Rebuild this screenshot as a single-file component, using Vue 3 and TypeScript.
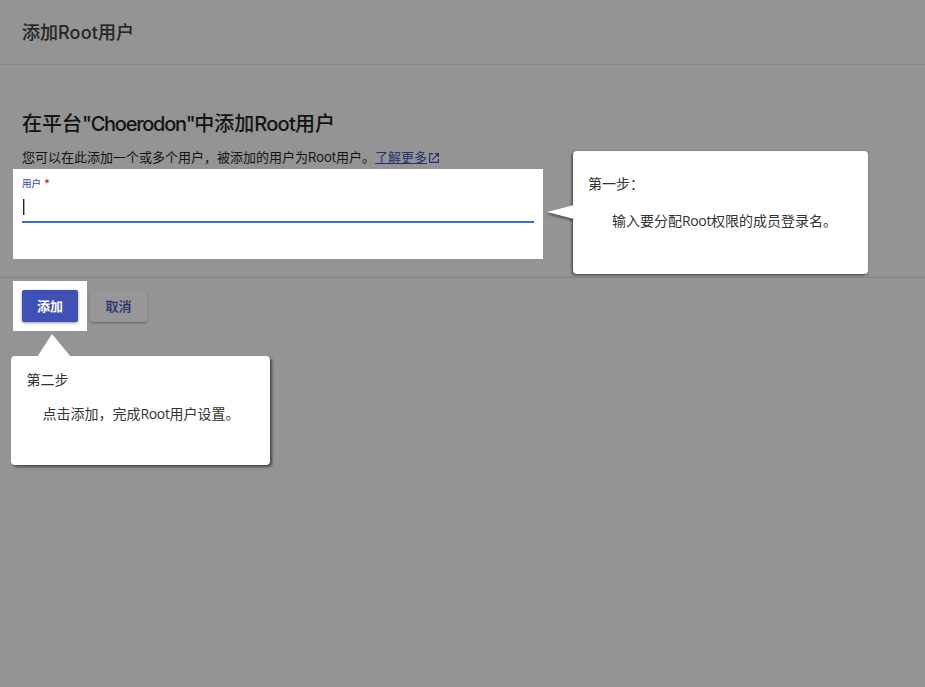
<script setup lang="ts">
import { ref } from 'vue'

interface Step {
  id: string
  title: string
  before: string
  latin: string
  after: string
}

const account = ref<string>('')
const steps: Step[] = [
  { id: 'one', title: '第一步：', before: '输入要分配', latin: 'Root', after: '权限的成员登录名。' },
  { id: 'two', title: '第二步', before: '点击添加，完成', latin: 'Root', after: '用户设置。' },
]
</script>

<template>
  <main class="page">
    <header class="header">
      <h1>添加<span class="latin">Root</span>用户</h1>
    </header>

    <section class="content">
      <h2>在平台<span class="brand">"Choerodon"</span>中添加<span class="latin">Root</span>用户</h2>
      <p class="description">
        <span>您可以在此添加一个或多个用户，被添加的用户为<span class="latin">Root</span>用户。</span>
        <a class="more">了解更多</a>
        <svg class="open" viewBox="0 0 12 12" fill="none" stroke="currentColor" stroke-width="1.2">
          <path d="M5 1.6H1.6V10.4H10.4V7M7 1.6H10.4V5M10.2 1.8L4.2 7.8" />
        </svg>
      </p>
      <div class="field">
        <label>用户 <i>*</i></label>
        <div class="input">{{ account }}<span class="caret"></span></div>
      </div>
    </section>

    <footer class="actions">
      <div class="spot"><button class="primary">添加</button></div>
      <button class="cancel">取消</button>
    </footer>

    <aside v-for="step in steps" :key="step.id" class="tip" :class="step.id">
      <svg v-if="step.id === 'one'" class="arrow" viewBox="0 0 27 16"><path d="M27 0V14L0 7Z" /></svg>
      <svg v-else class="arrow" viewBox="0 0 34 23"><path d="M0 23L15 0L34 23Z" /></svg>
      <h3>{{ step.title }}</h3>
      <p>{{ step.before }}<span class="latin">{{ step.latin }}</span>{{ step.after }}</p>
    </aside>
  </main>
</template>

<style>
body {
  background: #949494;
}
</style>

<style scoped>
* {
  box-sizing: border-box;
}
.page {
  position: relative;
  height: 687px;
  overflow: hidden;
  background: #949494;
  color: #131313;
  font-family: Inter, 'Noto Sans CJK SC', sans-serif;
  white-space: nowrap;
}
h1, h2, h3, p {
  margin: 0;
}
.header {
  height: 65px;
  padding: 19px 22px 0;
  border-bottom: 1px solid #858585;
}
h1 {
  font-size: 18px;
  line-height: 27px;
  font-weight: 500;
  color: #262626;
  -webkit-text-stroke: 0.1px currentColor;
}
h1 .latin {
  letter-spacing: 0.2px;
  -webkit-text-stroke: 0;
}
.content {
  height: 213px;
  padding: 44px 13px 0;
  border-bottom: 1px solid #838383;
}
h2 {
  padding-left: 9px;
  font-size: 20px;
  line-height: 30px;
  font-weight: 500;
}
.brand {
  letter-spacing: -1.25px;
}
h2 .latin {
  letter-spacing: -0.75px;
}
.description {
  display: flex;
  align-items: center;
  height: 20px;
  margin-top: 8px;
  padding-left: 9px;
  font-size: 13px;
  line-height: 20px;
}
.more {
  color: #27316f;
  text-decoration: underline;
}
.open {
  width: 12px;
  height: 12px;
  margin: 2px 0 0 1px;
  color: #27316f;
}
.field {
  width: 530px;
  height: 90px;
  margin-top: 2px;
  padding: 7px 9px 0;
  background: #fff;
}
label {
  display: block;
  height: 15px;
  font-size: 9.5px;
  line-height: 15px;
  color: #3f51b5;
  -webkit-text-stroke: 0.15px currentColor;
}
label i {
  color: #d50000;
  font-style: normal;
  font-size: 11px;
  margin-left: 0.5px;
  -webkit-text-stroke: 0;
}
.input {
  height: 32px;
  width: 512px;
  padding: 8px 0 0 1px;
  border-bottom: 2px solid #3a6ad8;
}
.caret {
  display: block;
  width: 1px;
  height: 16px;
  background: #222;
  box-shadow: 1px 0 0 #aaa;
}
.actions {
  display: flex;
  align-items: flex-start;
  padding: 3px 13px;
}
.spot {
  width: 74px;
  height: 50px;
  padding: 9px;
  background: #fff;
}
button {
  height: 32px;
  padding: 0;
  border: 0;
  border-radius: 2px;
  font-family: inherit;
  font-size: 13px;
  line-height: 32px;
  font-weight: 500;
  box-shadow: 0 1px 3px #0006;
}
.primary {
  width: 56px;
  background: #3f51b5;
  color: #fff;
  font-weight: 700;
}
.cancel {
  width: 57px;
  margin: 9px 0 0 3px;
  background: #979797;
  color: #27316f;
  box-shadow: 0 1px 2px #0005;
  -webkit-text-stroke: 0.1px currentColor;
}
.tip {
  position: absolute;
  background: #fff;
  border-radius: 4px;
  color: #333;
  font-family: 'Open Sans', 'Noto Sans CJK SC', sans-serif;
  font-size: 14px;
  line-height: 20px;
}
.tip h3 {
  font-size: 14px;
  font-weight: 400;
}
.tip .latin {
  letter-spacing: -0.35px;
}
.arrow {
  position: absolute;
  fill: #fff;
}
.one {
  left: 573px;
  top: 151px;
  width: 295px;
  height: 123px;
  padding: 23px 15px;
  box-shadow: -1px 1px 3px #0009;
}
.one p {
  padding: 17px 0 0 24px;
}
.one .arrow {
  left: -26px;
  top: 54px;
  width: 27px;
  height: 16px;
  filter: drop-shadow(-1px 2px 1px #0006);
}
.two {
  left: 11px;
  top: 356px;
  width: 259px;
  height: 109px;
  padding: 14px 15.5px;
  box-shadow: 2px 2px 3px #0008;
}
.two p {
  padding: 14px 0 0 16px;
}
.two .arrow {
  left: 26px;
  top: -22px;
  width: 34px;
  height: 23px;
}
</style>
